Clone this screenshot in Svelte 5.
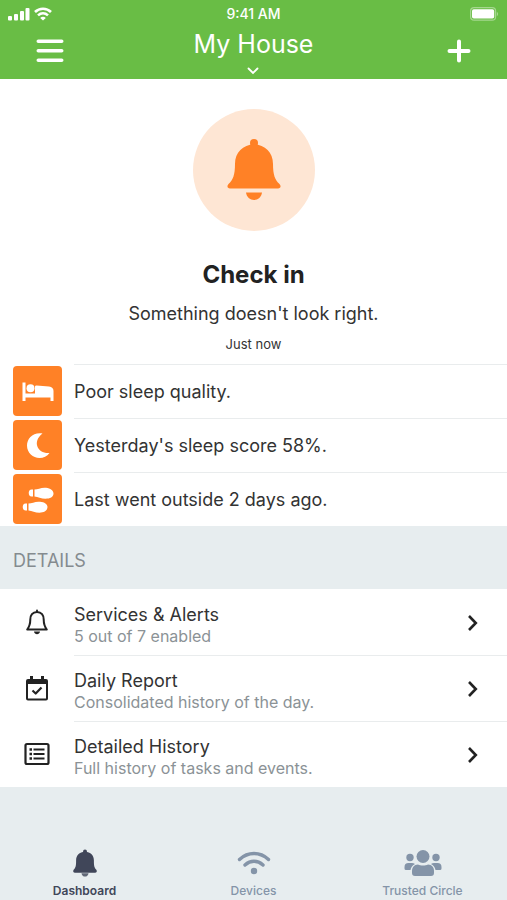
<script lang="ts">
  let activeTab = 'Dashboard';

  const alerts = [
    { icon: 'bed', text: 'Poor sleep quality.' },
    { icon: 'moon', text: "Yesterday's sleep score 58%." },
    { icon: 'steps', text: 'Last went outside 2 days ago.' }
  ];

  const details = [
    { icon: 'bell', title: 'Services & Alerts', note: '5 out of 7 enabled' },
    { icon: 'calendar', title: 'Daily Report', note: 'Consolidated history of the day.' },
    { icon: 'list', title: 'Detailed History', note: 'Full history of tasks and events.' }
  ];

  const tabs = ['Dashboard', 'Devices', 'Trusted Circle'];
</script>

<div class="app">
  <header>
    <div class="status">
      <div class="signal">
        <svg width="22" height="14" viewBox="0 0 22 14" fill="#fff" aria-hidden="true">
          <rect x="0" y="9" width="4" height="4.500" rx="1" />
          <rect x="6" y="7" width="4" height="6.500" rx="1" />
          <rect x="12" y="4" width="4" height="9.500" rx="1" />
          <rect x="17.500" y="1" width="4" height="12.500" rx="1" />
        </svg>
        <svg width="18" height="14" viewBox="0 0 18 14" fill="none" stroke="#fff" stroke-width="2.600" aria-hidden="true">
          <path d="M1 5C5.500.6 12.500.6 17 5" />
          <path d="M4 8.400C7 5.700 11 5.700 14 8.400" />
          <path d="M9 13.600L6.200 10.900C7.800 9.500 10.200 9.500 11.800 10.900Z" fill="#fff" stroke="none" />
        </svg>
      </div>
      <span>9:41 AM</span>
      <svg class="battery" width="29" height="14" viewBox="0 0 29 14" aria-hidden="true">
        <rect x="0.600" y="0.600" width="25" height="12.600" rx="3.500" fill="none" stroke="#a5d78f" stroke-width="1.200" />
        <rect x="2" y="2.200" width="22.200" height="9.400" rx="1.800" fill="#fff" />
        <path d="M26.800 5V9C28.500 8.500 28.500 5.500 26.800 5Z" fill="#a5d78f" />
      </svg>
    </div>
    <div class="nav">
      <button aria-label="Menu">
        <svg width="28" height="24" viewBox="0 0 28 24" stroke="#fff" stroke-width="3.600" stroke-linecap="round">
          <path d="M2.300 2.300H25.700M2.300 11.800H25.700M2.300 21.300H25.700" />
        </svg>
      </button>
      <button class="house">
        <h1>My House</h1>
        <svg width="12" height="8" viewBox="0 0 12 8" fill="none" stroke="#fff" stroke-width="1.800" stroke-linecap="round">
          <path d="M1.500 1.500L6 6L10.500 1.500" />
        </svg>
      </button>
      <button class="add" aria-label="Add">
        <svg width="24" height="24" viewBox="0 0 24 24" stroke="#fff" stroke-width="4" stroke-linecap="round">
          <path d="M2.500 12H21.500M12 2.500V21.500" />
        </svg>
      </button>
    </div>
  </header>

  <main>
    <section class="hero">
      <div class="circle">
        <svg width="54" height="62" viewBox="0 0 54 62" fill="#ff8126" aria-hidden="true">
          <circle cx="27" cy="4" r="4" />
          <path d="M27 5.500C16 5.500 8 13.500 8 25C8 36 6 41 1.500 45C-.5 47 .5 49.500 3 49.500H51C53.500 49.500 54.500 47 52.500 45C48 41 46 36 46 25C46 13.500 38 5.500 27 5.500Z" />
          <path d="M19 53.500H35C34.500 58 31 61 27 61S19.500 58 19 53.500Z" />
        </svg>
      </div>
      <h2>Check in</h2>
      <p>Something doesn't look right.</p>
      <small>Just now</small>
    </section>

    <ul class="alerts">
      {#each alerts as alert}
        <li>
          <span class="tile">
            <svg width="32" height="32" viewBox="0 0 32 32" fill="#fff" aria-hidden="true">
              {#if alert.icon === 'bed'}
                <path d="M.5 7.500H3.500V18.500H13V11.500Q13 10.500 14.500 10.500L27 11.500Q31.500 12 31.500 16V26H28.500V22.500H3.500V26H.5Z" />
                <circle cx="8.500" cy="13.200" r="4" />
              {:else if alert.icon === 'moon'}
                <path d="M20.500 4.500C11 3 5 9.500 5 16.500C5 24 11 29 17.500 29C21.500 29 25 27.500 27.500 24C16 25 9.500 13 20.500 4.500Z" />
              {:else}
                <path d="M12.500 6.500C16 6.500 19 4.200 24 4.700C28.500 5.200 31.500 7.500 31.500 10.500C31.500 14 28 15.700 23.500 15.700C19 15.700 16 14 12.500 13.500Z" />
                <path d="M11 6.500V13.500H9.500C5.800 13.500 5.800 6.500 9.500 6.500Z" />
                <path d="M6.500 20.500C10 20.500 13 18.200 18 18.700C22.500 19.200 25.500 21 25.500 24C25.500 27.500 22 29.700 17.500 29.700C13 29.700 10 28 6.500 27.500Z" />
                <path d="M5 20.500V27.500H3.500C-.2 27.500-.2 20.500 3.500 20.500Z" />
              {/if}
            </svg>
          </span>
          <span class="alert-text">{alert.text}</span>
        </li>
      {/each}
    </ul>

    <h3>DETAILS</h3>

    <div class="details">
      {#each details as item}
        <a href="#details">
          <svg class="detail-icon" width="26" height="26" viewBox="0 0 26 26" fill="none" stroke="#222" stroke-width="2" stroke-linejoin="round" aria-hidden="true">
            {#if item.icon === 'bell'}
              <path d="M13 3C8.500 3 6.300 6.500 6.300 10.500C6.300 15 5.500 17.500 3.200 20.500H22.800C20.500 17.500 19.700 15 19.700 10.500C19.700 6.500 17.500 3 13 3Z" />
              <path d="M13 1.500V3" stroke-linecap="round" />
              <path d="M10 22.500H16C15.500 26 10.500 26 10 22.500Z" fill="#222" stroke="none" />
            {:else if item.icon === 'calendar'}
              <rect x="3" y="5" width="20" height="19.500" rx="1" />
              <path d="M3 7H23" stroke-width="4" />
              <path d="M7.500 1V5M18.500 1V5" stroke-width="3" />
              <path d="M8.500 15.500L11.700 18.500L17.500 12.500" stroke-width="2.200" />
            {:else}
              <rect x="1.500" y="3" width="23" height="20" rx="1.500" stroke-width="2.200" />
              <path d="M9.500 8.500H20.500M9.500 13H20.500M9.500 17.500H20.500" />
              <path d="M5.500 8.500H8M5.500 13H8M5.500 17.500H8" stroke-width="2.400" />
            {/if}
          </svg>
          <span class="detail-body">
            <span class="labels">
              <strong>{item.title}</strong>
              <span>{item.note}</span>
            </span>
            <svg width="12" height="18" viewBox="0 0 12 18" fill="none" stroke="#222" stroke-width="2.600" aria-hidden="true">
              <path d="M2 2L8.800 9L2 16" />
            </svg>
          </span>
        </a>
      {/each}
    </div>
  </main>

  <nav class="tabs">
    {#each tabs as tab}
      <button class:active={activeTab === tab} on:click={() => (activeTab = tab)}>
        {#if tab === 'Dashboard'}
          <svg width="24" height="28" viewBox="0 0 54 62" fill="currentColor" aria-hidden="true">
            <circle cx="27" cy="5" r="4.500" />
            <path d="M27 5.500C14 5.500 7 13.500 7 25C7 38 6 42 1.500 46C-.5 49 .5 53 4 53H50C53.500 53 54.500 49 52.500 46C48 42 47 38 47 25C47 13.500 40 5.500 27 5.500Z" />
            <path d="M19 54H35C34 59 31 61.500 27 61.500S20 59 19 54Z" opacity=".8" />
          </svg>
        {:else if tab === 'Devices'}
          <svg width="34" height="28" viewBox="0 0 34 28" fill="none" stroke="currentColor" stroke-width="3.400" stroke-linecap="round" aria-hidden="true">
            <path d="M2.500 10.500C11 2.500 23 2.500 31.500 10.500" />
            <path d="M8 16C13.500 11 20.500 11 26 16" />
            <circle cx="17" cy="22" r="3.200" fill="currentColor" stroke="none" />
          </svg>
        {:else}
          <svg width="38" height="28" viewBox="0 0 38 28" fill="currentColor" aria-hidden="true">
            <circle cx="19" cy="7.500" r="6.500" />
            <circle cx="6" cy="8.500" r="3.700" />
            <circle cx="32" cy="8.500" r="3.700" />
            <path d="M14 15.500C16.500 16.800 21.500 16.800 24 15.500C28 15.500 30 18.500 30 22V24Q30 27 27 27H11Q8 27 8 24V22C8 18.500 10 15.500 14 15.500Z" />
            <path d="M4.500 14H8Q9.500 14 11 15C8 16.500 7 18.500 6.500 21H2Q.5 21 .5 19.500V18Q.5 14 4.500 14Z" />
            <path d="M33.500 14H30Q28.500 14 27 15C30 16.500 31 18.500 31.500 21H36Q37.500 21 37.500 19.500V18Q37.500 14 33.500 14Z" />
          </svg>
        {/if}
        <span>{tab}</span>
      </button>
    {/each}
  </nav>
</div>

<style>
  :global(body) {
    background: #e7edef;
  }

  .app {
    display: flex;
    flex-direction: column;
    min-height: 100vh;
    font-family: 'Inter', 'Liberation Sans', sans-serif;
    color: #333;
    background: #e7edef;
  }

  h1, h2, h3, p, ul {
    margin: 0;
    padding: 0;
    font-weight: 400;
  }

  svg {
    display: block;
    flex: none;
  }

  button {
    padding: 0;
    border: none;
    background: none;
    font-family: inherit;
    color: inherit;
    cursor: pointer;
  }

  header {
    background: #69bd45;
    color: #fff;
  }

  .status {
    display: grid;
    grid-template-columns: 1fr auto 1fr;
    align-items: center;
    height: 27px;
    padding: 0 8px;
    font-size: 14px;
    font-weight: 500;
  }

  .signal {
    display: flex;
    gap: 4px;
  }

  .battery {
    justify-self: end;
  }

  .nav {
    display: grid;
    grid-template-columns: 1fr auto 1fr;
    align-items: center;
    padding: 0 36px 4px;
  }

  .add {
    justify-self: end;
  }

  .house {
    display: flex;
    flex-direction: column;
    align-items: center;
    gap: 6px;
  }

  h1 {
    font-size: 25px;
    line-height: 34px;
  }

  .hero {
    display: flex;
    flex-direction: column;
    align-items: center;
    padding: 30px 16px 12px;
    background: #fff;
  }

  .circle {
    display: flex;
    align-items: center;
    justify-content: center;
    width: 122px;
    height: 122px;
    border-radius: 50%;
    background: #fee6d4;
  }

  h2 {
    margin-top: 28px;
    font-size: 24px;
    line-height: 32px;
    font-weight: 700;
    color: #222;
  }

  .hero p {
    margin-top: 12px;
    font-size: 18px;
    line-height: 22px;
  }

  small {
    margin-top: 11px;
    font-size: 13px;
    line-height: 16px;
  }

  .alerts {
    background: #fff;
    list-style: none;
  }

  .alerts li {
    display: flex;
    align-items: center;
    gap: 12px;
    height: 54px;
    padding-left: 13px;
  }

  .tile {
    display: flex;
    align-items: center;
    justify-content: center;
    width: 49px;
    height: 50px;
    border-radius: 4px;
    background: #ff8126;
  }

  .alert-text {
    flex: 1;
    height: 54px;
    box-sizing: border-box;
    border-top: 1px solid #e9eced;
    font-size: 18px;
    line-height: 53px;
  }

  h3 {
    padding: 0 13px;
    font-size: 18px;
    line-height: 70px;
    height: 63px;
    color: #858b8f;
  }

  .details {
    background: #fff;
  }

  .details a {
    display: flex;
    align-items: center;
    padding-left: 24px;
    gap: 24px;
    color: inherit;
    text-decoration: none;
  }

  .detail-body {
    display: flex;
    flex: 1;
    align-items: center;
    justify-content: space-between;
    height: 66px;
    padding-right: 28px;
    box-sizing: border-box;
    border-top: 1px solid #e9eced;
  }

  .details a:first-child .detail-body {
    border-top-color: transparent;
  }

  .labels {
    display: flex;
    flex-direction: column;
    padding-top: 4px;
  }

  .labels strong {
    font-size: 18px;
    line-height: 22px;
    font-weight: 400;
  }

  .labels span {
    font-size: 16px;
    line-height: 20px;
    color: #8b9296;
  }

  .tabs {
    display: flex;
    margin-top: auto;
  }

  .tabs button {
    display: flex;
    flex: 1;
    flex-direction: column;
    align-items: center;
    gap: 6px;
    padding-bottom: 1px;
    font-size: 12px;
    line-height: 16px;
    font-weight: 500;
    color: #8494a8;
  }

  .tabs .active {
    color: #404659;
    font-weight: 600;
  }
</style>
